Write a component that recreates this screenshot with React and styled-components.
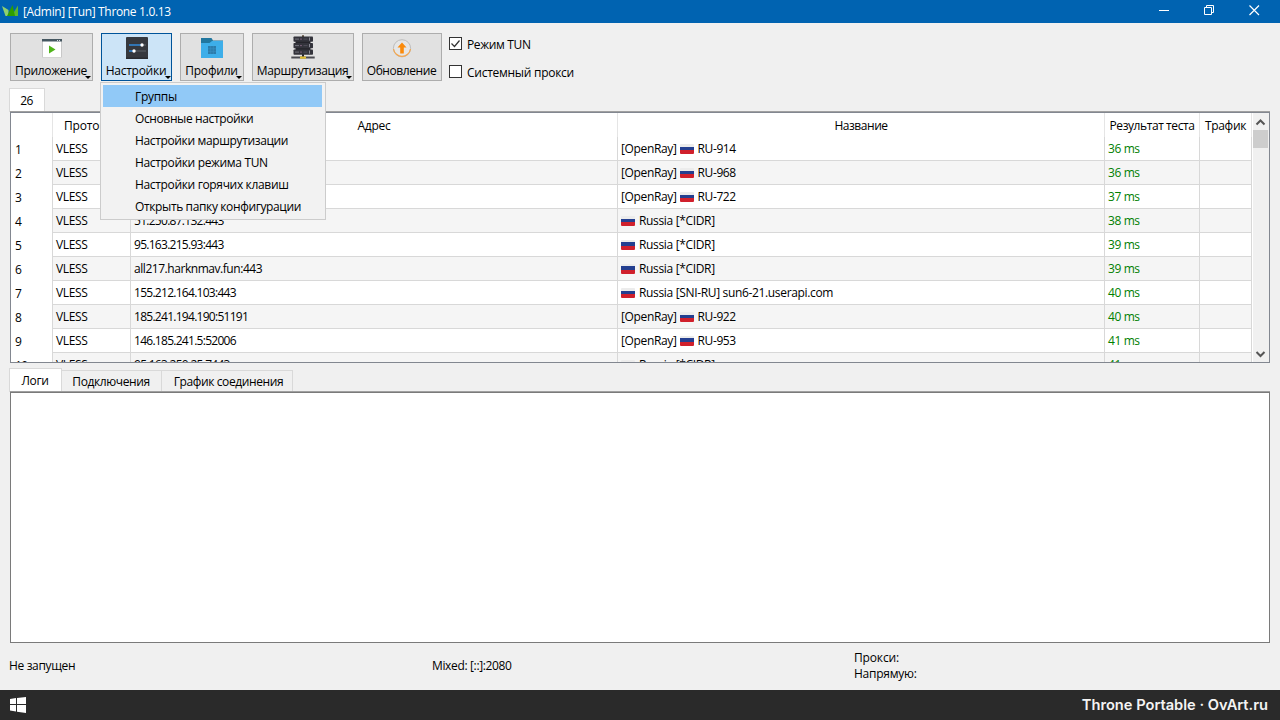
import React from "react";
import styled, { createGlobalStyle, css } from "styled-components";

const GlobalStyle = createGlobalStyle`
  * { box-sizing: border-box; }
  body { margin: 0; background: #f0f0f0; overflow: hidden; }
  svg { display: block; flex: none; overflow: visible; }
`;

const Window = styled.div`
  width: 1280px;
  height: 720px;
  display: flex;
  flex-direction: column;
  background: #f0f0f0;
  color: #000;
  font: 12px/16px "Open Sans", "Noto Sans", sans-serif;
  white-space: nowrap;
`;

const Text = styled.span`
  letter-spacing: ${(p) => p.$track ?? -0.35}px;
`;

const TitleBar = styled.header`
  height: 23px;
  flex: none;
  display: flex;
  align-items: flex-start;
  padding-right: 3px;
  background: #0063b1;
  color: #fff;
`;

const LogoBox = styled.div`
  padding: 5px 4px 0 2px;
`;

const AppTitle = styled.h1`
  margin: 4px auto 0 0;
  font-size: 12px;
  font-weight: 400;
  line-height: 16px;
  letter-spacing: -0.33px;
`;

const WindowButton = styled.div`
  width: 45px;
  height: 21px;
  display: flex;
  align-items: center;
  justify-content: center;
`;

const Toolbar = styled.nav`
  height: 58px;
  flex: none;
  display: flex;
  align-items: flex-start;
  gap: 8px;
  padding: 10px 10px 0;
`;

const ToolSlot = styled.div`
  position: relative;
`;

const ToolButton = styled.div`
  position: relative;
  width: ${(p) => p.$width}px;
  height: 48px;
  display: flex;
  flex-direction: column;
  align-items: center;
  padding-top: 2px;
  gap: 3px;
  border: 1px solid #adadad;
  background: #e1e1e1;
  ${(p) => p.$active && css`
    border-color: #00549a;
    background: #cce4f7;
  `}
`;

const ToolLabel = styled(Text)`
  margin-right: 1px;
`;

const MenuArrow = styled.i`
  position: absolute;
  right: ${(p) => (p.$active ? 0 : 1)}px;
  bottom: 1px;
  border: 3px solid transparent;
  border-top-color: #000;
  border-bottom: 0;
`;

const Menu = styled.ul`
  position: absolute;
  z-index: 2;
  left: -1px;
  top: 49px;
  width: 226px;
  margin: 0;
  padding: 2px;
  border: 1px solid #ccc;
  background: #f2f2f2;
  list-style: none;
`;

const MenuItem = styled.li`
  height: 22px;
  width: 219px;
  padding: 4px 0 0 32px;
  background: ${(p) => (p.$active ? "#91c9f7" : "transparent")};
`;

const Checks = styled.div`
  display: flex;
  flex-direction: column;
  gap: 12px;
  padding-top: 4px;
  margin-left: -1px;
`;

const Check = styled.label`
  height: 16px;
  display: flex;
  gap: 5px;
`;

const Box = styled.span`
  width: 13px;
  height: 13px;
  border: 1px solid #333;
  background: #fff;
`;

const Tabs = styled.div`
  height: ${(p) => p.$height}px;
  flex: none;
  display: flex;
  align-items: flex-end;
  padding-left: 9px;
`;

const Tab = styled.div`
  width: ${(p) => p.$width}px;
  height: ${(p) => (p.$active ? 24 : 22)}px;
  display: flex;
  justify-content: center;
  padding-top: ${(p) => (p.$active ? 4 : 3)}px;
  padding-left: ${(p) => p.$shift ?? 0}px;
  padding-right: ${(p) => (p.$shift ? 0 : 1)}px;
  border: 1px solid #d9d9d9;
  border-bottom: 0;
  border-left-width: ${(p) => (p.$active ? 1 : 0)}px;
  background: ${(p) => (p.$active ? "#fff" : "#f0f0f0")};
`;

const Pane = styled.section`
  height: ${(p) => p.$height}px;
  flex: none;
  margin: 0 10px;
  display: flex;
  overflow: hidden;
  border: 1px solid ${(p) => p.$edge};
  box-shadow: 0 -1px 0 #a0a0a0;
  background: #fff;
`;

const Grid = styled.div`
  width: 1241px;
  flex: none;
`;

const Row = styled.div`
  height: 24px;
  display: grid;
  grid-template-columns: 42px 78px 487px 487px 95px 52px;
`;

const HeadCell = styled.div`
  display: flex;
  justify-content: center;
  padding-top: 5px;
  border-right: 1px solid #e5e5e5;
`;

const NumCell = styled.div`
  padding: 5px 0 0 4px;
  border-right: 1px solid #d8d8d8;
`;

const Cell = styled.div`
  height: 24px;
  padding: 4px 0 0 3px;
  display: flex;
  align-items: flex-start;
  border-right: 1px solid #d8d8d8;
  border-bottom: 1px solid #d8d8d8;
  background: ${(p) => (p.$alt ? "#f5f5f5" : "#fff")};
  color: ${(p) => (p.$good ? "#008000" : "#000")};
`;

const Flag = styled.span`
  width: 14px;
  height: 10px;
  margin: 3px 4px 0 ${(p) => (p.$inset ? 3 : 0)}px;
  border-radius: 1px;
  background: linear-gradient(#ececec 0 2.5px, #243f90 2.5px 6px, #d0202c 6px);
`;

const ScrollBar = styled.div`
  width: 17px;
  height: 100%;
  padding: 1px 1px 1px 0;
  display: flex;
  flex-direction: column;
  align-items: center;
  border-left: 1px solid #fff;
  background: #f0f0f0;
`;

const Thumb = styled.div`
  width: 15px;
  height: 18px;
  margin-bottom: auto;
  background: #cdcdcd;
`;

const StatusBar = styled.footer`
  height: 47px;
  flex: none;
  display: grid;
  grid-template-columns: 423px 422px 1fr;
  align-items: center;
  padding: 0 0 1px 9px;
`;

const Traffic = styled.div`
  display: flex;
  flex-direction: column;
`;

const TaskBar = styled.div`
  height: 30px;
  flex: none;
  display: flex;
  align-items: center;
  justify-content: space-between;
  padding: 0 12px 0 10px;
  background: #2a2a2a;
  color: #f4f4f4;
  font: 600 14.65px/20px Inter, sans-serif;
`;

const Logo = () => (
  <svg width="17" height="11" viewBox="0 0 17 11">
    <path d="M0 1l6.500 4v6H3.500z" fill="#8fd06f" />
    <path d="M16 .5V11H9.500z" fill="#5bb72c" />
    <path d="M5 11L10.500 0 13 11z" fill="#2f9e00" />
  </svg>
);

const AppIcon = () => (
  <svg width="24" height="24" viewBox="0 0 24 24">
    <path d="M2 3h20v18.500H2z" fill="#c8c8c8" />
    <path d="M3 5h18v16H3z" fill="#fff" />
    <path d="M2 3h20v2.500H2z" fill="#455761" />
    <path d="M17 4h1v1h-1zM19 4h1v1h-1z" fill="#d6dde0" />
    <path d="M9 9.500l6.500 4L9 17.500z" fill="#51b51b" />
  </svg>
);

const SettingsIcon = () => (
  <svg width="24" height="24" viewBox="0 0 24 24">
    <rect x="1" y="1" width="22" height="22" rx="1" fill="#35383e" />
    <path d="M1 21.500h22V23H1z" fill="#292b30" />
    <path d="M4 9h17M4 15h17" stroke="#50545b" strokeWidth="1.500" />
    <path d="M4 9h13M4 15h5" stroke="#2b83d4" strokeWidth="1.500" />
    <circle cx="17" cy="9" r="1.700" fill="#fff" />
    <circle cx="9" cy="15" r="1.700" fill="#fff" />
  </svg>
);

const FolderIcon = () => (
  <svg width="24" height="24" viewBox="0 0 24 24">
    <path d="M1 2h10.500l1.500 2.500h10V9H1z" fill="#21779f" />
    <path d="M1 7h8.500l2.500-2h11v17H1z" fill="#3daee9" />
    <path d="M8 10h8v8H8z" fill="#2b7cab" />
    <path d="M8 12.800h8M8 15.300h8M10.700 10v8M13.300 10v8" stroke="#3991c2" strokeWidth=".6" />
  </svg>
);

const ServerIcon = () => (
  <svg width="24" height="24" viewBox="0 0 24 24">
    <path d="M11 -.8h2V1h-2z" fill="#5a4a38" />
    <path d="M4.500 5h15v10h-15zM11 18h2v3h-2z" fill="#24242a" />
    {[0.5, 7, 13.500].map((y) => (
      <g key={y}>
        <rect x="2.500" y={y} width="19.500" height="5.200" rx=".8" fill="#33333b" />
        <path d={`M4 ${y + 2.6}h4`} stroke="#74747e" />
        <path d={`M9 ${y + 2.6}h2`} stroke="#7a5f78" />
        <path d={`M12.500 ${y + 2.6}h4`} stroke="#50505a" />
        <path d={`M18.500 ${y + 1}v3.200`} stroke="#8a8a94" />
      </g>
    ))}
    <path d="M.3 20.500h23.400v2H.3z" fill="#4a4a50" />
    <path d="M9 20.500h6v2.200H9z" fill="#e0bd31" />
  </svg>
);

const UpdateIcon = () => (
  <svg width="24" height="24" viewBox="0 0 24 24">
    <circle cx="12" cy="12.300" r="8.600" fill="#e6e6e6" stroke="#bdbdbd" />
    <path d="M3.500 13a8.600 8.600 0 0 0 17 0" fill="none" stroke="#f5a64c" strokeWidth="1.200" />
    <path d="M12 6.500l4.500 5h-2.700v6h-3.600v-6H7.500z" fill="#fa8a0b" />
  </svg>
);

const Chevron = ({ down }) => (
  <svg width="13" height="16" viewBox="0 0 13 16">
    <path d={down ? "M2.500 7l4 4 4-4" : "M2.500 10.500l4-4 4 4"} fill="none" stroke="#555" strokeWidth="2" />
  </svg>
);

const tools = [
  ["Приложение", 83, AppIcon, -0.35],
  ["Настройки", 71, SettingsIcon, -0.27],
  ["Профили", 64, FolderIcon, -0.2],
  ["Маршрутизация", 102, ServerIcon, -0.37],
  ["Обновление", 80, UpdateIcon, -0.42],
];

const menuItems = [
  ["Группы", -0.3],
  ["Основные настройки", -0.38],
  ["Настройки маршрутизации", -0.36],
  ["Настройки режима TUN", -0.34],
  ["Настройки горячих клавиш", -0.34],
  ["Открыть папку конфигурации", -0.37],
];

const rows = [
  ["", "[OpenRay]", "RU-914", 36],
  ["", "[OpenRay]", "RU-968", 36],
  ["", "[OpenRay]", "RU-722", 37],
  ["51.250.87.132:443", "", "Russia [*CIDR]", 38],
  ["95.163.215.93:443", "", "Russia [*CIDR]", 39],
  ["all217.harknmav.fun:443", "", "Russia [*CIDR]", 39],
  ["155.212.164.103:443", "", "Russia [SNI-RU] sun6-21.userapi.com", 40],
  ["185.241.194.190:51191", "[OpenRay]", "RU-922", 40],
  ["146.185.241.5:52006", "[OpenRay]", "RU-953", 41],
  ["95.163.250.25:7443", "", "Russia [*CIDR]", 41],
];

export default function App() {
  return (
    <Window>
      <GlobalStyle />
      <TitleBar>
        <LogoBox><Logo /></LogoBox>
        <AppTitle>[Admin] [Tun] Throne 1.0.13</AppTitle>
        <WindowButton><svg width="11" height="11"><path d="M0 5.500h10" stroke="#fff" /></svg></WindowButton>
        <WindowButton>
          <svg width="11" height="11" fill="none" stroke="#fff"><path d="M.5 2.500h7v7h-7zM2.500 2.500v-2h7v7h-2" /></svg>
        </WindowButton>
        <WindowButton><svg width="11" height="11"><path d="M.5.5l9.500 9.500M10 .5L.5 10" stroke="#fff" strokeWidth="1.200" /></svg></WindowButton>
      </TitleBar>
      <Toolbar>
        {tools.map(([label, width, Icon, track], i) => (
          <ToolSlot key={label}>
            <ToolButton $width={width} $active={i === 1}>
              <Icon />
              <ToolLabel $track={track}>{label}</ToolLabel>
              {i < 4 && <MenuArrow $active={i === 1} />}
            </ToolButton>
            {i === 1 && (
              <Menu>
                {menuItems.map(([item, itemTrack], n) => (
                  <MenuItem key={item} $active={n === 0}><Text $track={itemTrack}>{item}</Text></MenuItem>
                ))}
              </Menu>
            )}
          </ToolSlot>
        ))}
        <Checks>
          <Check>
            <Box><svg width="11" height="11"><path d="M1.500 5.500l3 3 5-6" fill="none" stroke="#333" strokeWidth="1.200" /></svg></Box>
            <Text>Режим TUN</Text>
          </Check>
          <Check><Box /><Text $track={-0.27}>Системный прокси</Text></Check>
        </Checks>
      </Toolbar>
      <Tabs $height={31}><Tab $width={36} $active><Text $track={-0.6}>26</Text></Tab></Tabs>
      <Pane $height={251} $edge="#828790">
        <Grid>
          <Row>
            <HeadCell />
            <HeadCell><Text $track={-0.15}>Протокол</Text></HeadCell>
            <HeadCell><Text $track={-0.25}>Адрес</Text></HeadCell>
            <HeadCell><Text $track={-0.45}>Название</Text></HeadCell>
            <HeadCell><Text $track={-0.42}>Результат теста</Text></HeadCell>
            <HeadCell><Text $track={-0.3}>Трафик</Text></HeadCell>
          </Row>
          {rows.map(([address, group, name, ms], i) => (
            <Row key={i}>
              <NumCell><Text $track={-0.6}>{i + 1}</Text></NumCell>
              <Cell $alt={i % 2}><Text $track={-0.35}>VLESS</Text></Cell>
              <Cell $alt={i % 2}><Text $track={address.startsWith("all") ? -0.45 : -0.72}>{address}</Text></Cell>
              <Cell $alt={i % 2}>
                {group && <Text>{group}</Text>}
                <Flag $inset={!!group} />
                <Text $track={group ? -0.4 : -0.34}>{name}</Text>
              </Cell>
              <Cell $alt={i % 2} $good><Text $track={-0.4}>{ms} ms</Text></Cell>
              <Cell $alt={i % 2} />
            </Row>
          ))}
        </Grid>
        <ScrollBar><Chevron /><Thumb /><Chevron down /></ScrollBar>
      </Pane>
      <Tabs $height={29}>
        <Tab $width={53} $active><Text>Логи</Text></Tab>
        <Tab $width={100}><Text $track={-0.4}>Подключения</Text></Tab>
        <Tab $width={131} $shift={3}><Text $track={-0.4}>График соединения</Text></Tab>
      </Tabs>
      <Pane $height={251} $edge="#7a7a7a" />
      <StatusBar>
        <Text>Не запущен</Text>
        <Text>Mixed: [::]:2080</Text>
        <Traffic><Text $track={-0.15}>Прокси:</Text><Text $track={-0.25}>Напрямую:</Text></Traffic>
      </StatusBar>
      <TaskBar>
        <svg width="16" height="16" fill="#fff"><path d="M0 2l6-1v6H0zM7 .9L16 0v7H7zM0 8h6v6.500l-6-1zM7 8h9v8l-9-1.200z" /></svg>
        <span>Throne Portable · OvArt.ru</span>
      </TaskBar>
    </Window>
  );
}
